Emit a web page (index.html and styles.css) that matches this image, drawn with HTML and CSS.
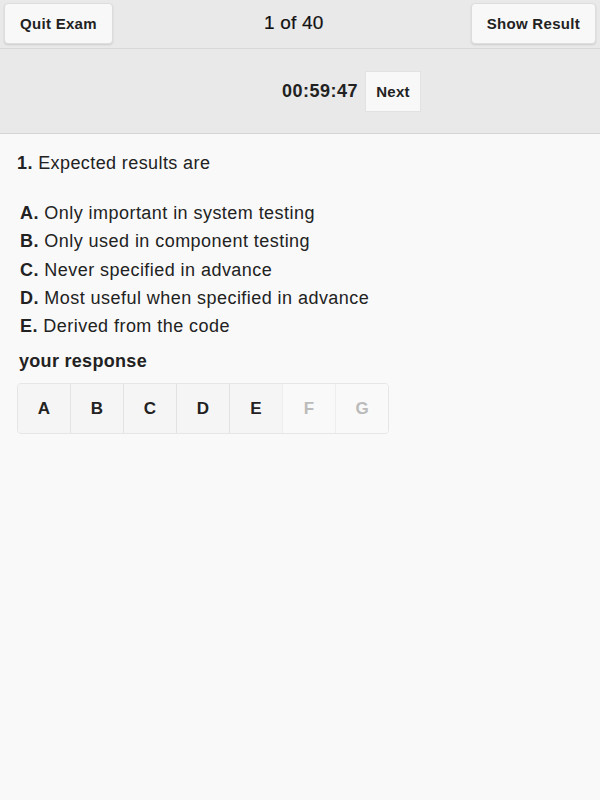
FILE: index.html
```html
<!DOCTYPE html>
<html>
<head>
<meta charset="utf-8">
<link rel="stylesheet" href="styles.css">
</head>
<body>
<header class="topbar">
  <button class="btn">Quit Exam</button>
  <div class="count">1 of 40</div>
  <button class="btn">Show Result</button>
</header>
<div class="subbar">
  <span class="timer">00:59:47</span>
  <button class="next">Next</button>
</div>
<main class="content">
  <p class="question"><b>1.</b> Expected results are</p>
  <ul class="options">
    <li><b>A.</b> Only important in system testing</li>
    <li><b>B.</b> Only used in component testing</li>
    <li><b>C.</b> Never specified in advance</li>
    <li><b>D.</b> Most useful when specified in advance</li>
    <li><b>E.</b> Derived from the code</li>
  </ul>
  <div class="resp-label">your response</div>
  <div class="answers">
    <button class="ans">A</button>
    <button class="ans">B</button>
    <button class="ans">C</button>
    <button class="ans">D</button>
    <button class="ans">E</button>
    <button class="ans off">F</button>
    <button class="ans off">G</button>
  </div>
</main>
</body>
</html>
```
FILE: styles.css
```css
* { box-sizing: border-box; }
html, body { margin: 0; padding: 0; height: 100%; }
body {
  background: #f9f9f9;
  font-family: "Liberation Sans", Arial, sans-serif;
  color: #222;
}
.topbar {
  height: 49px;
  background: #e9e9e9;
  border-bottom: 1px solid #d8d8d8;
  display: flex;
  align-items: center;
  justify-content: space-between;
  padding: 0 4px;
}
.btn {
  height: 41px;
  margin-top: -1px;
  background: #f8f8f8;
  border: 1px solid #ddd;
  border-radius: 4px;
  box-shadow: 0 1px 2px rgba(0,0,0,0.12);
  font-family: inherit;
  font-weight: bold;
  font-size: 15px;
  letter-spacing: 0.3px;
  color: #222;
  padding: 0 15px;
}
.count {
  font-size: 19px;
  letter-spacing: 0.2px;
  color: #111;
  margin-left: 4px;
  margin-top: -2px;
  -webkit-text-stroke: 0.2px #111;
}
.subbar {
  height: 85px;
  background: #e9e9e9;
  border-bottom: 1px solid #d6d6d6;
  display: flex;
  align-items: center;
  padding-left: 282px;
}
.timer {
  font-size: 18px;
  font-weight: bold;
  letter-spacing: 0.5px;
  color: #222;
}
.next {
  margin-left: 7px;
  width: 56px;
  height: 41px;
  background: #f8f8f8;
  border: 1px solid #e2e2e2;
  font-family: inherit;
  font-weight: bold;
  font-size: 15px;
  letter-spacing: 0.3px;
  color: #222;
}
.content { padding: 18px 17px 10px; }
.question {
  margin: 0 0 25px;
  font-size: 18px;
  line-height: 22px;
  letter-spacing: 0.4px;
}
.options { list-style: none; margin: 0; padding: 0 0 0 3px; }
.options li {
  font-size: 18px;
  line-height: 28.25px;
  letter-spacing: 0.45px;
}
.resp-label {
  margin-top: 10px;
  font-size: 18px;
  line-height: 22px;
  font-weight: bold;
  letter-spacing: 0.3px;
  padding-left: 2px;
}
.answers {
  margin-top: 11px;
  display: flex;
  width: 372px;
  height: 51px;
  border: 1px solid #e6e6e6;
  border-radius: 4px;
  overflow: hidden;
}
.ans {
  flex: 1;
  background: #f5f5f5;
  border: none;
  border-left: 1px solid #e2e2e2;
  font-family: inherit;
  font-weight: bold;
  font-size: 17px;
  color: #222;
}
.ans:first-child { border-left: none; }
.ans.off { background: #f9f9f9; color: #bbb; border-left-color: #eee; }
```
